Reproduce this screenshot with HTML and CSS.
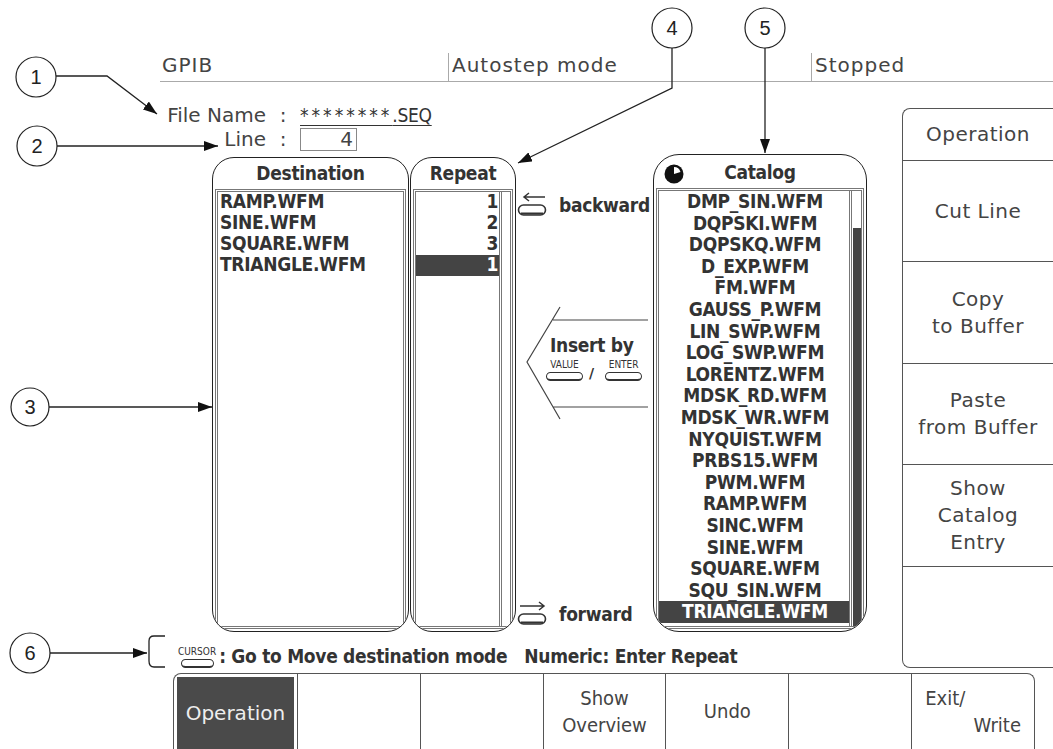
FILE: index.html
```
<!DOCTYPE html>
<html lang="en">
  <head>
    <meta charset="UTF-8" />
    <title>Sequence editor</title>
    <link rel="stylesheet" href="styles.css">
  </head>
  <body>
    <header class="status">
      <div class="status-cell">GPIB</div>
      <div class="status-cell">Autostep mode</div>
      <div class="status-cell">Stopped</div>
    </header>

    <div class="middle">
      <div class="workarea">
        <div class="fileinfo">
          <span class="fi-label">File Name</span>
          <span class="fi-colon">:</span>
          <span class="fi-value"><span class="stars">********</span>.SEQ</span>
          <span class="fi-label">Line</span>
          <span class="fi-colon">:</span>
          <span class="fi-box">4</span>
        </div>

        <div class="panels">
          <section class="panel panel-dest">
            <div class="panel-head">Destination</div>
            <div class="list-box">
              <ul class="rows">
                <li>RAMP.WFM</li>
                <li>SINE.WFM</li>
                <li>SQUARE.WFM</li>
                <li>TRIANGLE.WFM</li>
              </ul>
            </div>
          </section>

          <section class="panel panel-repeat">
            <div class="panel-head">Repeat</div>
            <div class="list-box">
              <ul class="rows">
                <li>1</li>
                <li>2</li>
                <li>3</li>
                <li class="sel">1</li>
              </ul>
              <div class="scroll"></div>
            </div>
          </section>

          <div class="nav-col">
            <div class="nav-row nav-back">
              <svg width="30" height="26" viewBox="0 0 30 26">
                <path d="M7 5 H28 M12 1 L7 5 L12 9" fill="none" stroke="#333" stroke-width="1.5"/>
                <rect x="1.5" y="13" width="27" height="10" rx="5" fill="none" stroke="#333" stroke-width="1.6"/>
                <path d="M4 21.5 H26" stroke="#333" stroke-width="2"/>
              </svg>
              <span>backward</span>
            </div>

            <div class="insert">
              <svg class="insert-lines" width="137" height="116" viewBox="0 0 137 116">
                <path d="M44 2 L11 57 L44 114 M37 15 H132 M37 102 H132" fill="none" stroke="#444" stroke-width="1.2"/>
              </svg>
              <div class="insert-title">Insert by</div>
              <div class="insert-keys">
                <span class="key"><span class="key-label">VALUE</span><span class="key-cap"></span></span>
                <span class="slash">/</span>
                <span class="key"><span class="key-label">ENTER</span><span class="key-cap"></span></span>
              </div>
            </div>

            <div class="nav-row nav-fwd">
              <svg width="30" height="26" viewBox="0 0 30 26">
                <path d="M3 5 H27 M22 1 L27 5 L22 9" fill="none" stroke="#333" stroke-width="1.5"/>
                <rect x="1.5" y="13" width="27" height="10" rx="5" fill="none" stroke="#333" stroke-width="1.6"/>
                <path d="M4 21.5 H26" stroke="#333" stroke-width="2"/>
              </svg>
              <span>forward</span>
            </div>
          </div>

          <section class="panel panel-catalog">
            <div class="panel-head">
              <svg class="busy" width="22" height="22" viewBox="0 0 22 22">
                <circle cx="11" cy="11" r="9.5" fill="#111"/>
                <path d="M11 4 A7 7 0 0 1 17.5 9 L11 11 Z" fill="#fff"/>
              </svg>
              Catalog
            </div>
            <div class="list-box">
              <ul class="rows">
                <li>DMP_SIN.WFM</li>
                <li>DQPSKI.WFM</li>
                <li>DQPSKQ.WFM</li>
                <li>D_EXP.WFM</li>
                <li>FM.WFM</li>
                <li>GAUSS_P.WFM</li>
                <li>LIN_SWP.WFM</li>
                <li>LOG_SWP.WFM</li>
                <li>LORENTZ.WFM</li>
                <li>MDSK_RD.WFM</li>
                <li>MDSK_WR.WFM</li>
                <li>NYQUIST.WFM</li>
                <li>PRBS15.WFM</li>
                <li>PWM.WFM</li>
                <li>RAMP.WFM</li>
                <li>SINC.WFM</li>
                <li>SINE.WFM</li>
                <li>SQUARE.WFM</li>
                <li>SQU_SIN.WFM</li>
                <li class="sel">TRIANGLE.WFM</li>
              </ul>
              <div class="scroll"><div class="thumb"></div></div>
            </div>
          </section>
        </div>

        <div class="hint">
          <span class="key"><span class="key-label">CURSOR</span><span class="key-cap"></span></span>
          <span class="hint-text">: Go to Move destination mode&nbsp;&nbsp; Numeric: Enter Repeat</span>
        </div>
      </div>

      <nav class="side-menu">
        <div class="side-item side-title">Operation</div>
        <div class="side-item">Cut Line</div>
        <div class="side-item">Copy<br>to Buffer</div>
        <div class="side-item">Paste<br>from Buffer</div>
        <div class="side-item">Show<br>Catalog<br>Entry</div>
        <div class="side-item"></div>
      </nav>
    </div>

    <nav class="bottom-menu">
      <div class="bm-item bm-active">Operation</div>
      <div class="bm-item"></div>
      <div class="bm-item"></div>
      <div class="bm-item">Show<br>Overview</div>
      <div class="bm-item">Undo</div>
      <div class="bm-item"></div>
      <div class="bm-item bm-exit"><span>Exit/</span><span class="bm-right">Write</span></div>
    </nav>

    <!-- numbered callouts drawn over the screen -->
    <svg class="callouts" width="1053" height="749" viewBox="0 0 1053 749">
      <defs>
        <marker id="ah" viewBox="0 0 14 10" refX="14" refY="5" markerWidth="14" markerHeight="10" orient="auto" markerUnits="userSpaceOnUse">
          <path d="M0 0 L14 5 L0 10 Z" fill="#111"/>
        </marker>
      </defs>
      <g fill="none" stroke="#222" stroke-width="1.3">
        <path d="M56 76 H107 L157 114" marker-end="url(#ah)"/>
        <path d="M57 146 H218" marker-end="url(#ah)"/>
        <path d="M49 407 H212" marker-end="url(#ah)"/>
        <path d="M672 48 V88 L518 163" marker-end="url(#ah)"/>
        <path d="M765 48 V153" marker-end="url(#ah)"/>
        <path d="M50 653 H147" marker-end="url(#ah)"/>
        <path d="M165 636 H154 Q149 636 149 641 V661 Q149 667 154 667 H165"/>
      </g>
      <g fill="#fff" stroke="#222" stroke-width="1.2">
        <circle cx="36" cy="77" r="20"/>
        <circle cx="37" cy="146" r="20"/>
        <circle cx="30" cy="407" r="19"/>
        <circle cx="672" cy="28" r="20"/>
        <circle cx="765" cy="28" r="20"/>
        <circle cx="30" cy="653" r="20"/>
      </g>
      <g class="callout-num" text-anchor="middle">
        <text x="36" y="84">1</text>
        <text x="37" y="153">2</text>
        <text x="30" y="414">3</text>
        <text x="672" y="35">4</text>
        <text x="765" y="35">5</text>
        <text x="30" y="660">6</text>
      </g>
    </svg>
  </body>
</html>
```
FILE: styles.css
```
body {
  margin: 0;
  width: 1053px;
  height: 749px;
  overflow: hidden;
  position: relative;
  background-color: #fff;
  color: #444;
  font-family: "DejaVu Sans", sans-serif;
}

/* narrow screen font */
.fi-value,
.panel-head,
.rows li,
.nav-row,
.insert-title,
.hint-text,
.bm-item {
  font-family: "DejaVu Sans Condensed", sans-serif;
  font-size: 19px;
  letter-spacing: -0.3px;
}

/* status line */
.status {
  display: grid;
  grid-template-columns: 288px 363px 1fr;
  align-items: end;
  height: 81px;
  margin-left: 160px;
  border-bottom: 1px solid #aaa;
}
.status-cell {
  height: 28px;
  line-height: 24px;
  padding-left: 2px;
  font-size: 20px;
  letter-spacing: 1px;
  box-sizing: border-box;
}
.status-cell + .status-cell {
  border-left: 1px solid #aaa;
  padding-left: 3px;
}

.middle {
  display: flex;
  height: 586px;
}
.workarea {
  width: 902px;
}

/* file name / line */
.fileinfo {
  display: grid;
  grid-template-columns: 100px 34px auto;
  margin: 21px 0 0 166px;
  font-size: 20px;
  line-height: 24px;
}
.fi-label {
  text-align: right;
}
.fi-colon {
  text-align: center;
}
.fi-value {
  text-decoration: underline;
  text-underline-offset: 3px;
  color: #333;
}
.stars {
  letter-spacing: 3px;
}
.fi-box {
  justify-self: start;
  width: 57px;
  height: 23px;
  margin-top: 1px;
  padding-right: 3px;
  box-sizing: border-box;
  border: 1px solid #888;
  text-align: right;
  line-height: 21px;
}

/* list panels */
.panels {
  display: flex;
  align-items: flex-start;
  height: 478px;
  margin: 3px 0 0 212px;
}
.panel {
  display: flex;
  flex-direction: column;
  box-sizing: border-box;
  border: 1px solid #222;
  border-radius: 22px;
  overflow: hidden;
  background-color: #fff;
}
.panel-dest {
  width: 197px;
  height: 475px;
  margin-top: 3px;
}
.panel-repeat {
  width: 106px;
  height: 475px;
  margin: 3px 0 0 1px;
}
.panel-catalog {
  width: 214px;
  height: 478px;
  border-radius: 26px;
}
.panel-head {
  flex: none;
  height: 31px;
  line-height: 31px;
  text-align: center;
  font-weight: bold;
  color: #333;
}
.panel-catalog .panel-head {
  position: relative;
  height: 33px;
  line-height: 35px;
}
.busy {
  position: absolute;
  left: 9px;
  top: 8px;
}
.list-box {
  flex: 1;
  display: flex;
  min-height: 0;
  margin: 0 2px 2px;
  border: 3px double #777;
}
.rows {
  flex: 1;
  margin: 0;
  padding: 0;
  list-style: none;
}
.rows li {
  box-sizing: border-box;
  height: 21px;
  line-height: 19px;
  padding: 0 0 2px 2px;
  white-space: nowrap;
  font-weight: bold;
  color: #333;
}
.rows li.sel {
  background-color: #444;
  color: #fff;
}
.panel-repeat .rows li {
  text-align: right;
  padding-right: 1px;
}
.panel-catalog .rows li {
  height: 21.6px;
  line-height: 20px;
  text-align: center;
}
.scroll {
  display: flex;
  flex-direction: column;
  width: 8px;
  border-left: 3px double #777;
}
.panel-catalog .scroll {
  width: 9px;
}
.thumb {
  flex: 1;
  margin: 37px 0 0 1px;
  background-color: #444;
}

/* backward / insert / forward */
.nav-col {
  display: flex;
  flex-direction: column;
  width: 137px;
  height: 478px;
}
.nav-row {
  display: flex;
  align-items: center;
  gap: 12px;
  padding-left: 1px;
  font-weight: bold;
  color: #333;
}
.nav-back {
  margin-top: 38px;
}
.nav-fwd {
  margin-top: auto;
  margin-bottom: 5px;
}
.insert {
  position: relative;
  height: 116px;
  margin-top: 87px;
}
.insert-lines {
  position: absolute;
  left: 0;
  top: 0;
}
.insert-title {
  position: relative;
  padding: 28px 0 0 34px;
  line-height: 24px;
  font-weight: bold;
  color: #333;
}
.insert-keys {
  position: relative;
  display: flex;
  align-items: center;
  margin: 2px 0 0 30px;
}
.insert-keys .key-cap {
  width: 35px;
}
.slash {
  margin: 6px 11px 0 6px;
  font-weight: bold;
  font-size: 14px;
  color: #333;
}

/* small labelled key */
.key {
  display: inline-flex;
  flex-direction: column;
  align-items: center;
}
.key-label {
  font-family: "DejaVu Sans Condensed", sans-serif;
  font-size: 10px;
  line-height: 11px;
  color: #333;
}
.key-cap {
  width: 31px;
  height: 6px;
  margin-top: 2px;
  border: 1.5px solid #333;
  border-bottom-width: 2.5px;
  border-radius: 5px;
}

.hint {
  display: flex;
  align-items: flex-end;
  gap: 3px;
  height: 32px;
  margin: 4px 0 0 178px;
}
.hint-text {
  line-height: 24px;
  font-weight: bold;
  color: #333;
}

/* right soft keys */
.side-menu {
  display: flex;
  flex-direction: column;
  box-sizing: border-box;
  width: 151px;
  height: 560px;
  margin-top: 26px;
  border: 1px solid #555;
  border-right: none;
  border-radius: 8px 0 0 8px;
}
.side-item {
  flex: 1;
  display: flex;
  align-items: center;
  justify-content: center;
  text-align: center;
  border-top: 1px solid #555;
  font-size: 20px;
  line-height: 27px;
  letter-spacing: 0.5px;
}
.side-title {
  flex: none;
  height: 51px;
  border-top: none;
}

/* bottom soft keys */
.bottom-menu {
  display: grid;
  grid-template-columns: repeat(7, 1fr);
  box-sizing: border-box;
  width: 862px;
  height: 76px;
  margin: 5px 0 0 173px;
  border: 1px solid #555;
  border-bottom: none;
  border-radius: 8px 8px 0 0;
}
.bm-item {
  display: flex;
  align-items: center;
  justify-content: center;
  text-align: center;
  border-left: 1px solid #555;
  font-size: 20px;
  letter-spacing: 0;
  line-height: 27px;
}
.bm-active {
  margin: 3px 3px 0 3px;
  border-left: none;
  background-color: #4a4a4a;
  color: #eee;
  font-family: "DejaVu Sans", sans-serif;
}
.bm-exit {
  flex-direction: column;
  align-items: stretch;
  text-align: left;
  padding: 0 13px;
}
.bm-right {
  text-align: right;
}

/* callouts */
.callouts {
  position: absolute;
  left: 0;
  top: 0;
  pointer-events: none;
}
.callout-num {
  font-family: "Liberation Sans", Arial, sans-serif;
  font-size: 20px;
  fill: #222;
}
```
